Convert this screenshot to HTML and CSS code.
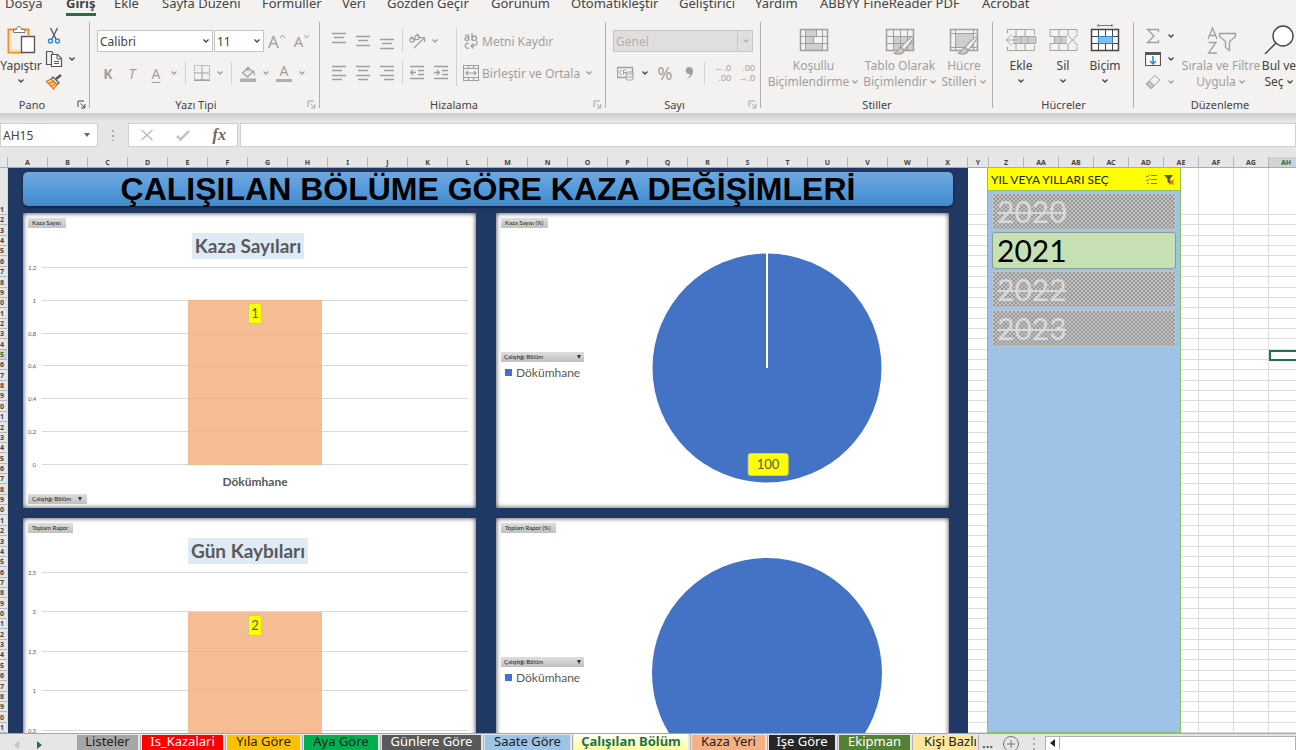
FILE: index.html
```html
<!DOCTYPE html>
<html lang="tr">
<head>
    <meta charset="utf-8">
    <title>Çalışılan Bölüm</title>
    <link rel="stylesheet" href="styles.css">
</head>
<body>

<svg class="defs" aria-hidden="true">
    <symbol id="chev" viewBox="0 0 8 8"><path d="M1.5 2.5 4 5l2.5-2.5" fill="none" stroke="currentColor" stroke-width="1.3"/></symbol>
    <symbol id="launch" viewBox="0 0 9 9"><path d="M1 7V1h6M3.500 3.500 7.500 7.500M7.800 4v4H4" fill="none" stroke="currentColor"/></symbol>
    <symbol id="brush" viewBox="0 0 24 22"><path d="M22 1c-1-.8-11 9-13 12l3 3C15 13 23 2.500 22 1z" fill="#f3f2f1" stroke="currentColor" stroke-width="1.2"/><path d="M9 13c-4 0-3 5-7 6 4 2 10 1 10-3z" fill="#c8c8c8" stroke="currentColor" stroke-width="1.2"/></symbol>
</svg>

<nav class="tabs">
    <a href="#">Dosya</a>
    <a href="#" class="active">Giriş</a>
    <a href="#">Ekle</a>
    <a href="#">Sayfa Düzeni</a>
    <a href="#">Formüller</a>
    <a href="#">Veri</a>
    <a href="#">Gözden Geçir</a>
    <a href="#">Görünüm</a>
    <a href="#">Otomatikleştir</a>
    <a href="#">Geliştirici</a>
    <a href="#">Yardım</a>
    <a href="#">ABBYY FineReader PDF</a>
    <a href="#">Acrobat</a>
</nav>

<div class="ribbon">
    <section class="group">
        <div class="group-body clipboard">
            <button class="big on">
                <svg width="32" height="32" viewBox="0 0 32 32"><path d="M18 28.500H3.500V5.500h20V11" fill="none" stroke="#e8912d" stroke-width="2"/><path d="M5.500 8v18.500H16" fill="none" stroke="#fbe0b0" stroke-width="2"/><path d="M8.500 8.500v-3h3c0-4 5-4 5 0h3.500v3z" fill="#fff" stroke="#777"/><path d="M16.500 12.500h13v16h-13z" fill="#fff" stroke="#555" stroke-width="1.300"/></svg>
                <span>Yapıştır</span>
                <svg class="chev"><use href="#chev"/></svg>
            </button>
            <div class="stack">
                <button class="icon on" aria-label="Kes"><svg width="16" height="18" viewBox="0 0 16 18"><path d="M4.500 1 10 12M11.500 1 6 12" fill="none" stroke="#555" stroke-width="1.300"/><circle cx="4.500" cy="14" r="2" fill="none" stroke="#2b88d8" stroke-width="1.400"/><circle cx="11.500" cy="14" r="2" fill="none" stroke="#2b88d8" stroke-width="1.400"/></svg></button>
                <button class="icon on" aria-label="Kopyala"><svg width="18" height="18" viewBox="0 0 18 18"><path d="M6 14.500H1.500v-13h5l2 2" fill="none" stroke="#555" stroke-width="1.200"/><path d="M6.500 4.500h6l4 4v8h-10z" fill="#fff" stroke="#555" stroke-width="1.200"/><path d="M12 5v4h4M9 11.500h5M9 13.500h5" fill="none" stroke="#555"/></svg></button>
                <button class="drop on" aria-label="Kopyala seçenekleri"><svg class="chev"><use href="#chev"/></svg></button>
                <button class="icon on" aria-label="Biçim Boyacısı"><svg width="18" height="16" viewBox="0 0 18 16"><path d="M16 1l-5 4" stroke="#555" stroke-width="2.500"/><path d="M8 3l6 6-2 1.500L6 5z" fill="#fff" stroke="#555" stroke-width="1.200"/><path d="M6 5 1.500 7.500 8.500 15 12 10.500z" fill="#f9d9b5" stroke="#e07b1a" stroke-width="1.300"/><path d="m4 9 4-1M6 12l4-2" stroke="#e07b1a" stroke-width="1.300"/></svg></button>
            </div>
        </div>
        <h2>Pano</h2>
        <svg class="launch on"><use href="#launch"/></svg>
    </section>

    <section class="group">
        <div class="group-body font">
            <div class="row fields">
                <label class="select font-name"><select aria-label="Yazı Tipi"><option>Calibri</option></select><svg class="chev"><use href="#chev"/></svg></label>
                <label class="select font-size"><select aria-label="Yazı Tipi Boyutu"><option>11</option></select><svg class="chev"><use href="#chev"/></svg></label>
                <button class="icon grow">A<svg width="7" height="5" viewBox="0 0 7 5"><path d="M1 4l2.500-3L6 4" fill="none" stroke="currentColor"/></svg></button>
                <button class="icon shrink">A<svg width="7" height="5" viewBox="0 0 7 5"><path d="M1 1l2.500 3L6 1" fill="none" stroke="currentColor"/></svg></button>
            </div>
            <div class="row">
                <button class="icon bold">K</button>
                <button class="icon italic">T</button>
                <button class="icon under">A</button>
                <button class="drop"><svg class="chev"><use href="#chev"/></svg></button>
                <i class="sep"></i>
                <button class="icon" aria-label="Kenarlıklar"><svg width="16" height="16" viewBox="0 0 16 16" fill="none" stroke="currentColor"><path d="M.5.5h15v14H.5z" stroke-dasharray="1.500 1"/><path d="M8 1v14M1 8h14M0 15.500h16"/></svg></button>
                <button class="drop"><svg class="chev"><use href="#chev"/></svg></button>
                <i class="sep"></i>
                <button class="icon" aria-label="Dolgu Rengi"><svg width="16" height="17" viewBox="0 0 16 17"><path d="M8 2.500 2.500 8l5 4L13 7zM8 6V1.500M13 5.500c1 1 1.500 3 1.500 5" fill="#e8e8e8" stroke="currentColor" stroke-width="1.200"/><path d="M0 13.500h16V17H0z" fill="#b0aeac"/></svg></button>
                <button class="drop"><svg class="chev"><use href="#chev"/></svg></button>
                <button class="icon fore">A</button>
                <button class="drop"><svg class="chev"><use href="#chev"/></svg></button>
            </div>
        </div>
        <h2>Yazı Tipi</h2>
        <svg class="launch"><use href="#launch"/></svg>
    </section>

    <section class="group">
        <div class="group-body align">
            <div class="rows">
                <div class="row">
                    <button class="icon" aria-label="Üste Hizala"><svg width="16" height="18" viewBox="0 0 16 18" stroke="currentColor" stroke-width="1.300"><path d="M1 1.500h14M3 5.500h10M1 10.500h14"/></svg></button>
                    <button class="icon" aria-label="Ortala"><svg width="16" height="18" viewBox="0 0 16 18" stroke="currentColor" stroke-width="1.300"><path d="M1 4.500h14M3 8.500h10M1 13.500h14"/></svg></button>
                    <button class="icon" aria-label="Alta Hizala"><svg width="16" height="18" viewBox="0 0 16 18" stroke="currentColor" stroke-width="1.300"><path d="M1 7.500h14M3 11.500h10M1 16.500h14"/></svg></button>
                    <i class="sep thin"></i>
                    <button class="icon" aria-label="Yönlendirme"><svg width="18" height="16" viewBox="0 0 18 16" fill="none" stroke="currentColor" stroke-width="1.200"><circle cx="4" cy="7" r="2.200"/><path d="M3 3.500 7 8M9 .5l3 5"/><circle cx="9" cy="4.500" r="2.200"/><path d="M6 15 16 5M12 4.500h4.500V9"/></svg></button>
                    <button class="drop"><svg class="chev"><use href="#chev"/></svg></button>
                </div>
                <div class="row">
                    <button class="icon" aria-label="Sola Hizala"><svg width="16" height="16" viewBox="0 0 16 16" stroke="currentColor" stroke-width="1.300"><path d="M1 1.500h14M1 5.500h10M1 10.500h14M1 14.500h10"/></svg></button>
                    <button class="icon" aria-label="Ortala"><svg width="16" height="16" viewBox="0 0 16 16" stroke="currentColor" stroke-width="1.300"><path d="M1 1.500h14M3 5.500h10M1 10.500h14M3 14.500h10"/></svg></button>
                    <button class="icon" aria-label="Sağa Hizala"><svg width="16" height="16" viewBox="0 0 16 16" stroke="currentColor" stroke-width="1.300"><path d="M1 1.500h14M5 5.500h10M1 10.500h14M5 14.500h10"/></svg></button>
                    <i class="sep thin"></i>
                    <button class="icon" aria-label="Girintiyi Azalt"><svg width="16" height="16" viewBox="0 0 16 16" fill="none" stroke="currentColor" stroke-width="1.300"><path d="M1 1.500h14M9 5.500h6M9 9.500h6M1 13.500h14M7 7.500H1.500M4 5 1.500 7.500 4 10"/></svg></button>
                    <button class="icon" aria-label="Girintiyi Artır"><svg width="16" height="16" viewBox="0 0 16 16" fill="none" stroke="currentColor" stroke-width="1.300"><path d="M1 1.500h14M9 5.500h6M9 9.500h6M1 13.500h14M1 7.500h5.500M4 5l2.500 2.500L4 10"/></svg></button>
                </div>
            </div>
            <div class="rows wide">
                <div class="row">
                    <button class="text"><svg width="16" height="18" viewBox="0 0 16 18" fill="none" stroke="currentColor" stroke-width="1.300"><path d="M2 3.500c4-1.500 4 0 4 5M6 5c-5 0-5 3.500-2.500 3.500C5 8.500 6 7.500 6 6"/><path d="M9 1v7.500"/><circle cx="11.300" cy="6.200" r="2.200"/><path d="M6 11.500c-5-2-5 6.500 0 4.500M14 9v2c0 2-2 3-6 3M10.500 11.500 8 14l2.500 2.500"/></svg>Metni Kaydır</button>
                </div>
                <div class="row">
                    <button class="text"><svg width="16" height="16" viewBox="0 0 16 16" fill="none" stroke="currentColor" stroke-width="1.200"><path d="M.5.5h15v15H.5zM.5 3.500h15M.5 12.500h15M5.500.5v3M10.500.5v3M5.500 12.500v3M10.500 12.500v3M3 8h10M5 6 3 8l2 2M11 6l2 2-2 2"/></svg>Birleştir ve Ortala</button>
                    <button class="drop"><svg class="chev"><use href="#chev"/></svg></button>
                </div>
            </div>
        </div>
        <h2>Hizalama</h2>
        <svg class="launch"><use href="#launch"/></svg>
    </section>

    <section class="group">
        <div class="group-body number">
            <div class="row">
                <label class="select off"><select aria-label="Sayı Biçimi" disabled><option>Genel</option></select><svg class="chev"><use href="#chev"/></svg></label>
            </div>
            <div class="row">
                <button class="icon" aria-label="Finansal Sayı Biçimi"><svg width="17" height="16" viewBox="0 0 17 16" fill="none" stroke="currentColor"><path d="M.5 2.500h15v10H.5z" stroke-width="1.400"/><path d="M5 5.500c-3-1-3 5 0 4M9 5H6.500v4.500M9 7.500H7"/><path d="M9 8c0-1.500 7-1.500 7 0v6c0 1.500-7 1.500-7 0z" fill="#f3f2f1"/><path d="M9 8c0 1.500 7 1.500 7 0M9 11c0 1.500 7 1.500 7 0"/></svg></button>
                <button class="drop wide on"><svg class="chev"><use href="#chev"/></svg></button>
                <button class="icon percent">%</button>
                <button class="icon" aria-label="Virgül Stili"><svg width="10" height="14" viewBox="0 0 10 14"><path d="M5 1a3.500 3.500 0 1 0 1 6.900C6 10 4 12 2 13c4-.5 7-4 7-8 0-2.500-2-4-4-4z" fill="currentColor"/></svg></button>
                <i class="sep thin"></i>
                <button class="icon decimals"><span>←.0</span><span>.00</span></button>
                <button class="icon decimals"><span>.00</span><span>→.0</span></button>
            </div>
        </div>
        <h2>Sayı</h2>
        <svg class="launch"><use href="#launch"/></svg>
    </section>

    <section class="group">
        <div class="group-body styles">
            <button class="big">
                <svg width="32" height="32" viewBox="0 0 32 32" fill="none" stroke="currentColor"><path d="M7 6h12v7h-4v6h9v8H7z" fill="#d0cecd" stroke="none"/><path d="M2.500 5.500h27v21h-27z" stroke-width="1.500"/><path d="M2 12.500h28M2 19.500h28M7.500 5v21M24.500 5v21M18.500 6v6M15.500 13v6"/></svg>
                <span>Koşullu</span>
                <span>Biçimlendirme <svg class="chev"><use href="#chev"/></svg></span>
            </button>
            <button class="big">
                <svg width="32" height="32" viewBox="0 0 32 32" fill="none" stroke="currentColor"><path d="M9 12h20v14H9z" fill="#d0cecd" stroke="none"/><path d="M2.500 5.500h27v21h-27z" stroke-width="1.500"/><path d="M2 12.500h28M2 19.500h28M9.500 5v21M16.500 5v21M23.500 5v21"/><use href="#brush" x="8" y="11" width="24" height="21"/></svg>
                <span>Tablo Olarak</span>
                <span>Biçimlendir <svg class="chev"><use href="#chev"/></svg></span>
            </button>
            <button class="big">
                <svg width="32" height="32" viewBox="0 0 32 32" fill="none" stroke="currentColor"><path d="M8 10h18v13H8z" fill="#d0cecd" stroke="none"/><path d="M2.500 5.500h27v21h-27z" stroke-width="1.500"/><path d="M2 9.500h28M2 23.500h28M7.500 5v21M25.500 5v21"/><use href="#brush" x="8" y="11" width="24" height="21"/></svg>
                <span>Hücre</span>
                <span>Stilleri <svg class="chev"><use href="#chev"/></svg></span>
            </button>
        </div>
        <h2>Stiller</h2>
    </section>

    <section class="group">
        <div class="group-body cells">
            <button class="big on">
                <svg class="dim" width="32" height="32" viewBox="0 0 32 32" fill="none" stroke="currentColor"><path d="M8 12h23v7H8z" fill="#d0cecd" stroke="none"/><path d="M2.500 9V5.500h27v5M2.500 23v3.500h27v-5M11 5.500v7M20 5.500v7M11 19.500v7M20 19.500v7M8 12.500h23v7H8M16 12.500v7M23 12.500v7M13 16H1.500M7 10.500 1.500 16 7 21.500"/></svg>
                <span>Ekle</span>
                <svg class="chev"><use href="#chev"/></svg>
            </button>
            <button class="big on">
                <svg class="dim" width="32" height="32" viewBox="0 0 32 32" fill="none" stroke="currentColor"><path d="M7 12h13v7H7z" fill="#d0cecd" stroke="none"/><path d="M3 12.500v-7h27V9M3 19.500v7h27V23M12 5.500v7M21 5.500v5M12 19.500v7M21 21v5.500M3 12.500h17M3 19.500h17M7.500 12.500v7M14 12.500v7M20 10l11 12M31 10 20 22"/></svg>
                <span>Sil</span>
                <svg class="chev"><use href="#chev"/></svg>
            </button>
            <button class="big on">
                <svg width="32" height="32" viewBox="0 0 32 32" fill="none" stroke="#444"><path d="M2.500 5.500h27v21h-27z" fill="#fff" stroke-width="1.500"/><path d="M2.500 12.500h27M2.500 19.500h27M9.500 5.500v21M16.500 5.500v21M23.500 5.500v21"/><path d="M9.500 12.500h14v7h-14z" fill="#83beec" stroke="#2b88d8"/><path d="M9 1.500h14M9 0v3M23 0v3" stroke="#2b88d8"/></svg>
                <span>Biçim</span>
                <svg class="chev"><use href="#chev"/></svg>
            </button>
        </div>
        <h2>Hücreler</h2>
    </section>

    <section class="group last">
        <div class="group-body editing">
            <div class="stack">
                <button class="icon" aria-label="Otomatik Toplam"><svg width="16" height="16" viewBox="0 0 16 16" fill="none" stroke="currentColor" stroke-width="1.300"><path d="M13.500 4V1.500h-11L9 8l-6.500 6.500h11V12"/></svg></button>
                <button class="drop on"><svg class="chev"><use href="#chev"/></svg></button>
                <button class="icon on" aria-label="Doldur"><svg width="16" height="16" viewBox="0 0 16 16" fill="none" stroke="#555"><path d="M.5 1.500h15v13H.5z" fill="#fff" stroke-width="1.200"/><path d="M0 3h16" stroke-width="2"/><path d="M8 5v8M5 10l3 3 3-3" stroke="#2b88d8" stroke-width="1.500"/></svg></button>
                <button class="drop on"><svg class="chev"><use href="#chev"/></svg></button>
                <button class="icon" aria-label="Temizle"><svg width="16" height="16" viewBox="0 0 16 16" fill="none" stroke="currentColor"><path d="M10 1.500 15 6 6 14.500 1 10z"/><path d="M4.500 7 9 11.500 6 14.500 1 10z" fill="#c8c8c8"/></svg></button>
                <button class="drop"><svg class="chev"><use href="#chev"/></svg></button>
            </div>
            <button class="big">
                <svg width="32" height="32" viewBox="0 0 32 32" fill="none" stroke="currentColor" stroke-width="1.300"><path d="M3 15 7.500 4 12 15M4.500 11.500h6M3.500 18.500H11L3.500 29H12"/><path d="M14.500 9.500h16v3l-6 5v9l-4-3v-6l-6-5z"/></svg>
                <span>Sırala ve Filtre</span>
                <span>Uygula <svg class="chev"><use href="#chev"/></svg></span>
            </button>
            <button class="big on">
                <svg width="32" height="32" viewBox="0 0 32 32" fill="none" stroke="#444" stroke-width="1.400"><circle cx="20" cy="12" r="10" fill="#fff"/><path d="M13 19 2 30"/></svg>
                <span>Bul ve</span>
                <span>Seç <svg class="chev"><use href="#chev"/></svg></span>
            </button>
        </div>
        <h2>Düzenleme</h2>
    </section>
</div>

<div class="formula-bar">
    <label class="name-box"><input type="text" value="AH15" aria-label="Ad Kutusu"><span class="arrow"></span></label>
    <span class="dots"></span>
    <div class="fx">
        <button aria-label="İptal"><svg width="14" height="14" viewBox="0 0 14 14"><path d="m1.500 2 11 10M12.500 2l-11 10" stroke="#bdbdbd" stroke-width="1.500"/></svg></button>
        <button aria-label="Gir"><svg width="14" height="14" viewBox="0 0 14 14"><path d="m1 8 3.500 3.500L13 3" fill="none" stroke="#c4c4c4" stroke-width="2.500"/></svg></button>
        <button class="fx-btn">fx</button>
    </div>
    <input class="formula" type="text" aria-label="Formül Çubuğu">
</div>

<div class="col-heads" id="colHeads"></div>

<main class="sheet" id="sheet">
    <div class="col-lines" id="colLines"></div>

    <div class="dashboard">
        <h1>ÇALIŞILAN BÖLÜME GÖRE KAZA DEĞİŞİMLERİ</h1>
        <div class="charts">
            <section class="card">
                <button class="field">Kaza Sayısı</button>
                <h3>Kaza Sayıları</h3>
                <div class="plot">
                    <div class="axis"><span>1,2</span><span>1</span><span>0,8</span><span>0,6</span><span>0,4</span><span>0,2</span><span>0</span></div>
                    <div class="lines"><i></i><i></i><i></i><i></i><i></i><i></i><i></i></div>
                    <div class="bar" style="height: 83.3%"><span class="badge">1</span></div>
                </div>
                <p class="category">Dökümhane</p>
                <button class="field">Çalıştığı Bölüm <span class="arrow"></span></button>
            </section>

            <section class="card pie-card">
                <div class="legend">
                    <button class="field">Kaza Sayısı (%)</button>
                    <button class="field long">Çalıştığı Bölüm <span class="arrow"></span></button>
                    <p><i></i>Dökümhane</p>
                </div>
                <div class="pie">
                    <svg viewBox="0 0 230 230"><circle cx="115" cy="115" r="114.500" fill="#4472c4"/><path d="M115 0v115" stroke="#fff" stroke-width="2"/></svg>
                    <span class="badge">100</span>
                </div>
            </section>

            <section class="card">
                <button class="field">Toplam Rapor</button>
                <h3>Gün Kaybıları</h3>
                <div class="plot">
                    <div class="axis"><span>2,5</span><span>2</span><span>1,5</span><span>1</span><span>0,5</span><span>0</span></div>
                    <div class="lines"><i></i><i></i><i></i><i></i><i></i><i></i></div>
                    <div class="bar" style="height: 80%"><span class="badge">2</span></div>
                </div>
            </section>

            <section class="card pie-card">
                <div class="legend">
                    <button class="field">Toplam Rapor (%)</button>
                    <button class="field long">Çalıştığı Bölüm <span class="arrow"></span></button>
                    <p><i></i>Dökümhane</p>
                </div>
                <div class="pie">
                    <svg viewBox="0 0 230 230"><circle cx="115" cy="115" r="115" fill="#4472c4"/></svg>
                </div>
            </section>
        </div>
    </div>

    <aside class="slicer">
        <header>
            <h2>YIL VEYA YILLARI SEÇ</h2>
            <button aria-label="Çoklu Seçim"><svg width="12" height="11" viewBox="0 0 12 11" fill="none" stroke="#77772a"><path d="M5 1.500h6M5 5.500h6M5 9.500h6M0 2l1.500 1L4 .5M0 6l1.500 1L4 4.500M1 9.500h2"/></svg></button>
            <button aria-label="Filtreyi Temizle"><svg width="12" height="11" viewBox="0 0 12 11"><path d="M1 1h9L7 5v5L4.500 8V5z" fill="#555"/><path d="m6.500 6 4 4.500M10.500 6l-4 4.500" stroke="#e0601a" stroke-width="1.300"/></svg></button>
        </header>
        <button class="year">2020</button>
        <button class="year picked">2021</button>
        <button class="year">2022</button>
        <button class="year">2023</button>
    </aside>
</main>

<footer class="sheet-tabs">
    <div class="arrows"><button class="prev" aria-label="Önceki"></button><button class="next" aria-label="Sonraki"></button></div>
    <button class="st gray">Listeler</button>
    <button class="st red">Is_Kazalari</button>
    <button class="st gold">Yıla Göre</button>
    <button class="st green">Aya Göre</button>
    <button class="st dark">Günlere Göre</button>
    <button class="st blue">Saate Göre</button>
    <button class="st current">Çalışılan Bölüm</button>
    <button class="st orange">Kaza Yeri</button>
    <button class="st black">İşe Göre</button>
    <button class="st olive">Ekipman</button>
    <button class="st cream">Kişi Bazlı</button>
    <button class="more">...</button>
    <button class="add" aria-label="Yeni Sayfa"><svg width="16" height="16" viewBox="0 0 16 16" fill="none" stroke="#777"><circle cx="8" cy="8" r="7.500"/><path d="M8 4v8M4 8h8"/></svg></button>
    <span class="dots"></span>
    <div class="scroll"><button aria-label="Sola Kaydır"></button></div>
</footer>

<script src="sheet.js"></script>
</body>
</html>
```
FILE: styles.css
```css
:root {
    --cols: 8px repeat(24, 40px) 21px repeat(9, 35px);
    --ui: "Noto Sans", "Open Sans", sans-serif;
    --calibri: Lato, "Open Sans", sans-serif;
}

* {
    box-sizing: border-box;
}

body {
    margin: 0;
    height: 100vh;
    display: flex;
    flex-direction: column;
    overflow: hidden;
    background: #e6e6e6;
    font-family: var(--ui);
    font-size: 12px;
    color: #444;
}

button, input, select {
    font: inherit;
    color: inherit;
    margin: 0;
    padding: 0;
    border: 0;
    background: none;
}

h1, h2, h3, p {
    margin: 0;
    font-weight: normal;
}

svg {
    display: block;
    flex: none;
}

.defs {
    position: absolute;
    width: 0;
    height: 0;
}

/* ribbon tabs */

.tabs {
    flex: none;
    height: 16px;
    padding-left: 5px;
    display: grid;
    grid-template-columns: 61px 48px 48px 100px 80px 45px 104px 80px 108px 76px 65px 162px auto;
    align-content: end;
    justify-content: start;
    justify-items: start;
    overflow: hidden;
    background: #f3f2f1;
    font-size: 13px;
}

.tabs a {
    color: #444;
    line-height: 20px;
    text-decoration: none;
    white-space: nowrap;
    border-bottom: 3px solid transparent;
}

.tabs .active {
    font-weight: bold;
    border-color: #217346;
}

/* ribbon */

.ribbon {
    flex: none;
    height: 97px;
    padding-top: 6px;
    display: grid;
    grid-template-columns: 90px 230px 286px 155px 232px 141px 1fr;
    overflow: hidden;
    background: #f3f2f1;
}

.group {
    display: grid;
    grid-template-rows: 75px 16px;
    position: relative;
    min-width: 0;
    background: linear-gradient(#b3b1af, #b3b1af) right top / 1px 86px no-repeat;
}

.group.last {
    background: none;
}

.group h2 {
    padding-right: 18px;
    font-size: 11px;
    line-height: 16px;
    text-align: center;
}

.group:first-child h2 {
    padding-right: 26px;
}

.group:nth-child(n+5) h2 {
    padding-right: 0;
}

.group.last h2 {
    width: 172px;
}

.launch {
    position: absolute;
    right: 4px;
    bottom: 4px;
    width: 9px;
    height: 9px;
    color: #a8a6a4;
}

.group-body {
    padding-top: 3px;
    color: #a19f9d;
}

.on {
    color: #444;
}

.row {
    height: 32px;
    display: flex;
    align-items: center;
}

.chev {
    width: 8px;
    height: 8px;
}

.icon, .drop {
    width: 24px;
    height: 22px;
    display: flex;
    flex: none;
    align-items: center;
    justify-content: center;
}

.drop {
    width: 12px;
}

.drop.wide {
    width: 16px;
}

.sep {
    width: 10px;
    height: 22px;
    background: linear-gradient(#d2d0ce, #d2d0ce) center / 1px 100% no-repeat;
}

.sep.thin {
    width: 6px;
}

.big {
    display: flex;
    flex-direction: column;
    align-items: center;
    font-size: 12px;
    line-height: 16px;
    white-space: nowrap;
}

.big > svg:first-child {
    margin-bottom: 2px;
}

.big span {
    display: flex;
    align-items: center;
    gap: 2px;
}

.big > .chev {
    margin-top: 3px;
}

.dim {
    color: #a5a3a1;
}

.select {
    display: grid;
    height: 22px;
    align-items: center;
    background: #fff;
    border: 1px solid #c8c6c4;
    color: #444;
}

.select > * {
    grid-area: 1 / 1;
}

.select select {
    appearance: none;
    width: 100%;
    padding-left: 2px;
    outline: 0;
}

.select .chev {
    justify-self: end;
    margin-right: 2px;
}

.select.off {
    width: 140px;
    background: #e1dfdd;
    color: #b1afad;
}

.select.off select {
    opacity: 1;
}

.select.off .chev {
    box-sizing: content-box;
    padding: 6px 0 6px 4px;
    border-left: 1px solid #c8c6c4;
}

.clipboard {
    display: flex;
    padding-top: 2px;
}

.clipboard .big {
    width: 42px;
}

.stack {
    display: grid;
    grid-template-columns: 24px 12px;
    grid-auto-rows: 23px;
    align-items: center;
}

.clipboard .stack .icon {
    grid-column: 1;
}

.font {
    padding-left: 6px;
}

.fields {
    gap: 1px;
    padding-left: 1px;
}

.font-name {
    width: 116px;
}

.font-size {
    width: 50px;
}

.grow {
    font-size: 17px;
}

.shrink {
    font-size: 15px;
}

.grow svg, .shrink svg {
    margin-bottom: 10px;
}

.bold {
    font-weight: bold;
    font-size: 14px;
}

.italic {
    font-style: italic;
    font-size: 14px;
}

.under {
    font-size: 14px;
    text-decoration: underline;
    text-underline-offset: 3px;
}

.fore {
    height: 17px;
    padding-bottom: 4px;
    background: linear-gradient(#b0aeac, #b0aeac) center bottom / 16px 3px no-repeat;
    font-size: 14px;
    line-height: 14px;
}

.align {
    display: flex;
    padding-left: 7px;
}

.rows.wide {
    margin-left: 3px;
    padding-left: 7px;
    background: linear-gradient(#d2d0ce, #d2d0ce) left 3px / 1px 58px no-repeat;
}

.text {
    display: flex;
    align-items: center;
    gap: 3px;
    white-space: nowrap;
}

.text + .drop {
    margin-left: 3px;
}

.number {
    padding-left: 7px;
}

.percent {
    font-size: 18px;
}

.decimals {
    flex-direction: column;
    align-items: flex-end;
    font-family: "Liberation Sans", sans-serif;
    font-size: 9px;
    line-height: 10px;
}

.styles {
    display: grid;
    grid-template-columns: 95px 78px 50px;
    justify-items: center;
    padding: 2px 0 0 5px;
}

.cells {
    display: grid;
    grid-template-columns: repeat(3, 42px);
    justify-items: center;
    padding: 2px 0 0 7px;
}

.editing {
    display: grid;
    grid-template-columns: 40px 80px 36px;
    padding: 2px 0 0 7px;
}

.editing .stack {
    align-content: start;
}

.editing .big {
    justify-self: center;
}

/* formula bar */

.formula-bar {
    flex: none;
    height: 44px;
    padding: 10px 0;
    display: flex;
    background: linear-gradient(#cbcbcb, #e6e6e6 8px);
}

.formula-bar > :not(.dots) {
    background: #fff;
    border: 1px solid #cfcfcf;
}

.name-box {
    width: 98px;
    border-left: 0;
    display: flex;
    align-items: center;
    padding: 0 7px 0 2px;
}

.name-box input {
    flex: 1;
    min-width: 0;
}

.arrow {
    border: 3px solid transparent;
    border-top: 4px solid #666;
    border-bottom: 0;
}

.dots {
    width: 30px;
    padding: 6px 0;
    background: linear-gradient(#aaa 2px, transparent 2px) center 6px / 2px 5px repeat-y content-box;
}

.fx {
    width: 110px;
    display: flex;
    align-items: center;
    justify-content: space-around;
}

.fx-btn {
    font-family: "Liberation Serif", serif;
    font-style: italic;
    font-weight: bold;
    font-size: 16px;
    color: #666;
}

.formula {
    flex: 1;
    margin-left: 2px;
}

/* worksheet */

.col-heads {
    flex: none;
    height: 11px;
    display: grid;
    grid-template-columns: var(--cols);
    overflow: hidden;
    border-bottom: 1px solid #ababab;
    font-size: 7px;
    font-weight: bold;
    line-height: 11px;
    text-align: center;
}

.col-heads span {
    border-right: 1px solid #b5b5b5;
}

.col-heads .on {
    background: #d2d2d2;
    color: #217346;
    box-shadow: inset 0 -1px #217346;
}

.sheet {
    flex: 1;
    min-height: 0;
    display: flex;
    flex-direction: column;
    position: relative;
    overflow: hidden;
    background: #fff;
}

.col-lines {
    position: absolute;
    inset: 0;
    display: grid;
    grid-template-columns: var(--cols);
}

.col-lines i {
    border-right: 1px solid #dcdcdc;
}

.sheet-row {
    flex: 1;
    min-height: 0;
    display: grid;
    grid-template-columns: var(--cols);
    border-bottom: 1px solid #dcdcdc;
}

.sheet-row:nth-of-type(2) {
    flex: 0 0 47px;
}

.sheet-row b {
    display: flex;
    align-items: flex-end;
    justify-content: flex-end;
    overflow: hidden;
    padding-right: 3px;
    background: #e6e6e6;
    border-right: 1px solid #ababab;
    box-shadow: 0 1px #b5b5b5;
    font-size: 7px;
    line-height: 9px;
}

.sheet-row b.on {
    background: #d2d2d2;
    color: #217346;
}

.sheet-row .cell {
    grid-column: 35;
    margin-bottom: -2px;
    border: 2px solid #217346;
    z-index: 1;
}

.dashboard {
    position: absolute;
    top: 0;
    bottom: 0;
    left: 8px;
    width: 960px;
    padding: 4px 15px;
    overflow: hidden;
    background: #203864;
}

.dashboard h1 {
    height: 34px;
    margin-bottom: 7px;
    border-radius: 5px;
    background: linear-gradient(#71a6db, #559bdb 50%, #438ac9);
    box-shadow: 0 1px 3px #0c1a33;
    color: #000;
    font: bold 32px/35px "Liberation Sans", Arial, sans-serif;
    text-align: center;
    white-space: nowrap;
}

.charts {
    display: grid;
    grid-template-columns: 1fr 1fr;
    gap: 10px 20px;
    margin-right: 4px;
}

.card {
    height: 295px;
    padding: 5px 8px 0 5px;
    display: flex;
    flex-direction: column;
    align-items: flex-start;
    background: #fff;
    box-shadow: inset 0 0 5px #333;
    font-family: var(--calibri);
    color: #595959;
}

.field {
    height: 10px;
    padding: 0 5px 0 4px;
    display: flex;
    flex: none;
    align-items: center;
    gap: 7px;
    background: linear-gradient(#dedede, #c0c0c0);
    color: #222;
    font-size: 6px;
    line-height: 10px;
    white-space: nowrap;
}

.field .arrow {
    border-width: 4px 2px 0;
    border-top-color: #333;
}

.field.long {
    width: 83px;
    padding: 0 3px;
    justify-content: space-between;
}

.card h3 {
    align-self: center;
    margin: 5px 0 8px;
    padding: 0 3px;
    background: #deeaf6;
    font-size: 19px;
    font-weight: bold;
    line-height: 26px;
}

.plot {
    align-self: stretch;
    height: 198px;
    display: grid;
    grid-template: 1fr / 14px 1fr;
}

.axis, .lines {
    display: flex;
    flex-direction: column;
    justify-content: space-between;
}

.axis {
    margin: -3px 6px -3px 0;
    font-size: 6px;
    line-height: 7px;
    text-align: right;
}

.lines {
    grid-area: 1 / 2;
}

.lines i {
    height: 1px;
    background: #d9d9d9;
}

.bar {
    grid-area: 1 / 2;
    align-self: end;
    justify-self: center;
    width: 134px;
    padding-top: 3px;
    background: rgba(244, 177, 131, .85);
    text-align: center;
}

.badge {
    display: inline-block;
    padding: 0 2px;
    border: 1px solid #c5d17a;
    border-radius: 3px;
    background: #ff0;
    font-size: 13px;
    line-height: 19px;
}

.category {
    align-self: center;
    margin-left: 14px;
    padding: 8px 0 3px;
    font-size: 12px;
    font-weight: bold;
    line-height: 18px;
}

.pie-card {
    flex-direction: row;
}

.legend {
    width: 151px;
    display: flex;
    flex-direction: column;
    align-items: flex-start;
}

.legend .long {
    margin-top: 124px;
}

.legend p {
    display: flex;
    align-items: center;
    gap: 4px;
    padding-left: 4px;
    font-size: 12px;
    line-height: 21px;
}

.legend i {
    width: 7px;
    height: 7px;
    background: #4472c4;
}

.pie {
    width: 230px;
    height: 230px;
    margin-top: 35px;
    position: relative;
}

.pie .badge {
    position: absolute;
    left: 50%;
    bottom: 7px;
    transform: translateX(-50%);
    margin-left: 1px;
    padding: 1px 8px;
}

.slicer {
    position: absolute;
    top: 0;
    bottom: 0;
    left: 987px;
    width: 194px;
    display: flex;
    flex-direction: column;
    gap: 2px;
    padding: 0 4px;
    background: #9dc3e6;
    border: 1px solid #8cc168;
    border-top: 0;
    font-family: var(--calibri);
}

.slicer header {
    height: 23px;
    margin: 0 -4px;
    padding: 0 5px 0 3px;
    display: flex;
    align-items: center;
    gap: 5px;
    background: #ff0;
    border-bottom: 1px solid #8cc168;
}

.slicer h2 {
    flex: 1;
    color: #222;
    font-size: 12px;
}

.year {
    height: 37px;
    padding-left: 4px;
    border: 1px solid #bfc6cc;
    border-radius: 3px;
    background: radial-gradient(circle at 1px 1px, #999 20%, transparent 30%) 0 0 / 4px 4px, radial-gradient(circle at 3px 3px, #999 20%, transparent 30%) 0 0 / 4px 4px #c2c2c2;
    color: #d9d9d9;
    font-size: 30px;
    line-height: 35px;
    text-align: left;
    text-decoration: line-through;
    text-decoration-thickness: 2px;
}

.year.picked {
    background: #c6e0b4;
    border-color: #8a9c8c;
    color: #000;
    text-decoration: none;
}

/* sheet tabs */

.sheet-tabs {
    flex: none;
    height: 17px;
    display: grid;
    grid-template-columns: 73px 61px 81px 73px 74px 99px 85px 114px 73px 66px 71px 62px 15px 24px 14px 1fr;
    column-gap: 4px;
    overflow: hidden;
    background: #e6e6e6;
    border-top: 1px solid #a6a6a6;
    font-size: 13px;
}

.arrows {
    display: flex;
    align-items: center;
    gap: 18px;
    padding: 4px 0 0 14px;
}

.arrows button {
    border: 4px solid transparent;
    border-left: 0;
    border-right: 5px solid #c4c4c4;
}

.arrows .next {
    border-right: 0;
    border-left: 5px solid #217346;
}

.st {
    height: 15px;
    margin-top: 1px;
    padding-bottom: 3px;
    line-height: 12px;
    overflow: hidden;
    white-space: nowrap;
    box-shadow: 2px 0 #e6e6e6, 3px 0 #b0b0b0;
    color: #222;
}

.gray { background: #a6a6a6; }
.red { background: #f00; color: #fff; }
.gold { background: #ffc000; }
.green { background: #00b050; }
.dark { background: #595959; color: #fff; }
.blue { background: #9dc3e6; }
.orange { background: #f4b183; }
.black { background: #262626; color: #fff; }
.olive { background: #548235; color: #fff; }
.cream { background: #ffe699; padding-left: 10px; }

.current {
    height: 16px;
    margin-top: 0;
    background: linear-gradient(#fff, #ffff99);
    color: #217346;
    font-weight: bold;
}

.more {
    line-height: 12px;
    color: #217346;
    font-weight: bold;
}

.add {
    padding: 2px 4px 0;
}

.sheet-tabs .dots {
    width: 14px;
    padding: 4px 0 0;
    background-position: center 0;
}

.scroll {
    margin-top: 2px;
    background: #fff;
    border: 1px solid #b0b0b0;
}

.scroll button {
    display: flex;
    align-items: center;
    justify-content: center;
    width: 14px;
    height: 12px;
    border-right: 1px solid #b0b0b0;
}

.scroll button::before {
    content: "";
    border: 4px solid transparent;
    border-left: 0;
    border-right: 5px solid #222;
}
```
FILE: sheet.js
```js
var cols = ' A B C D E F G H I J K L M N O P Q R S T U V W X Y Z AA AB AC AD AE AF AG AH'.split(' ')
var heads = document.getElementById('colHeads')
var lines = document.getElementById('colLines')
var sheet = document.getElementById('sheet')

cols.forEach(function(name) {
    var head = document.createElement('span')
    head.textContent = name
    if (name == 'AH') head.className = 'on'
    heads.appendChild(head)
    lines.appendChild(document.createElement('i'))
})

var dashboard = document.querySelector('.dashboard')
for (var i = 1; i <= 51; i++) {
    var row = document.createElement('div')
    var num = document.createElement('b')
    row.className = 'sheet-row'
    num.textContent = i
    row.appendChild(num)
    if (i == 15) {
        var cell = document.createElement('span')
        cell.className = 'cell'
        num.className = 'on'
        row.appendChild(cell)
    }
    sheet.insertBefore(row, dashboard)
}
```
